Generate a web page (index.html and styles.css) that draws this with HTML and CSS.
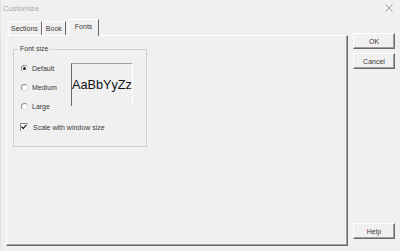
FILE: index.html
```html
<!DOCTYPE html>
<html lang="en">

<head>
    <meta charset="UTF-8">
    <meta name="viewport" content="width=device-width, initial-scale=1.0">
    <title>Customize</title>
    <link rel="stylesheet" href="styles.css">
</head>

<body>
    <div class="window">
        <div class="titlebar">
            <span class="title">Customize</span>
            <svg class="close" width="8" height="8" viewBox="0 0 8 8">
                <path d="M0.5 0.5 L7.5 7.5 M7.5 0.5 L0.5 7.5" stroke="#9a9a9a" stroke-width="1" fill="none" />
            </svg>
        </div>

        <div class="content">
            <div class="tabs-area">
                <div class="tabs">
                    <div class="tab first">Sections</div>
                    <div class="tab">Book</div>
                    <div class="tab active">Fonts</div>
                </div>

                <div class="panel">
                    <fieldset class="group">
                        <legend>Font size</legend>
                        <div class="group-top">
                            <div class="radios">
                                <div class="radio checked"><span class="circle"></span>Default</div>
                                <div class="radio"><span class="circle"></span>Medium</div>
                                <div class="radio"><span class="circle"></span>Large</div>
                            </div>
                            <div class="preview">AaBbYyZz</div>
                        </div>
                        <div class="check">
                            <span class="box">
                                <svg width="6" height="6" viewBox="0 0 6 6">
                                    <path d="M0.5 2.5 L2.2 4.5 L5.5 0.8" stroke="#222" stroke-width="1.2" fill="none" />
                                </svg>
                            </span>
                            Scale with window size
                        </div>
                    </fieldset>
                </div>
            </div>

            <div class="buttons">
                <div class="btn">OK</div>
                <div class="btn">Cancel</div>
                <div class="btn help">Help</div>
            </div>
        </div>
    </div>
</body>

</html>
```

FILE: styles.css
```css
* {
    margin: 0;
    padding: 0;
    box-sizing: border-box;
}

body {
    width: 400px;
    height: 251px;
    overflow: hidden;
    background: #f0f0f0;
    font-family: "Liberation Sans", Arial, sans-serif;
    font-size: 7px;
    color: #3a3a3a;
}

.window {
    width: 400px;
    height: 251px;
    display: flex;
    flex-direction: column;
    border-left: 1px solid #e4e4e4;
}

/* title bar */
.titlebar {
    height: 18px;
    display: flex;
    align-items: center;
    justify-content: space-between;
    padding: 0 7px 2px 2px;
}

.title {
    font-size: 7.6px;
    color: #a8a8a8;
}

/* main area */
.content {
    flex: 1;
    display: flex;
    gap: 5px;
    padding: 1px 5px 5px 5px;
}

.tabs-area {
    width: 342px;
    display: flex;
    flex-direction: column;
}

.tabs {
    height: 16px;
    display: flex;
    align-items: flex-end;
    padding-left: 2px;
}

.tab {
    height: 14px;
    line-height: 13px;
    padding: 0 3px;
    border-top: 1px solid #fff;
    border-left: 1px solid #fff;
    border-right: 1px solid #696969;
}

.tab.first {
    padding: 0 3px 0 2px;
}

.tab.active {
    height: 17px;
    margin-bottom: -1px;
    margin-left: 2px;
    padding: 0 6px;
    line-height: 14px;
    background: #f0f0f0;
    position: relative;
    z-index: 1;
}

.panel {
    height: 211px;
    border-top: 1px solid #fff;
    border-left: 1px solid #fff;
    border-right: 1px solid #696969;
    border-bottom: 1px solid #696969;
    box-shadow: inset -1px -1px 0 #a0a0a0;
    padding: 9px 0 0 6px;
}

/* group box */
.group {
    width: 134px;
    height: 102px;
    border: 1px solid #d0d0d0;
    padding: 0 6px 0 4px;
}

.group legend {
    padding: 0 2px;
    line-height: 8px;
}

.group-top {
    display: flex;
    margin-top: 6px;
    padding-left: 3px;
}

.radios {
    width: 50px;
    display: flex;
    flex-direction: column;
}

.radio {
    height: 19px;
    display: flex;
    align-items: center;
    gap: 4px;
}

.circle {
    width: 7px;
    height: 7px;
    border-radius: 50%;
    background: #fff;
    border: 1px solid;
    border-color: #8a8a8a #e0e0e0 #e0e0e0 #8a8a8a;
    display: flex;
    align-items: center;
    justify-content: center;
}

.radio.checked .circle::after {
    content: "";
    width: 3px;
    height: 3px;
    border-radius: 50%;
    background: #222;
}

.preview {
    width: 62px;
    height: 43px;
    margin-top: 4px;
    border-top: 1px solid #a0a0a0;
    border-left: 1px solid #696969;
    border-right: 1px solid #fff;
    display: flex;
    align-items: center;
    justify-content: center;
    font-size: 12.7px;
    color: #111;
}

.check {
    display: flex;
    align-items: center;
    gap: 5px;
    margin-top: 5px;
    padding-left: 2px;
    height: 12px;
}

.box {
    width: 8px;
    height: 8px;
    background: #fff;
    border: 1px solid;
    border-color: #8a8a8a #e0e0e0 #e0e0e0 #8a8a8a;
    display: flex;
    align-items: center;
    justify-content: center;
}

/* buttons on the right */
.buttons {
    width: 42px;
    display: flex;
    flex-direction: column;
    gap: 4px;
    padding-top: 14px;
}

.btn {
    height: 16px;
    display: flex;
    align-items: center;
    justify-content: center;
    border-top: 1px solid #fff;
    border-left: 1px solid #fff;
    border-right: 1px solid #696969;
    border-bottom: 1px solid #696969;
    box-shadow: inset -1px -1px 0 #a0a0a0;
}

.btn.help {
    margin-top: auto;
    margin-bottom: 7px;
}
```
